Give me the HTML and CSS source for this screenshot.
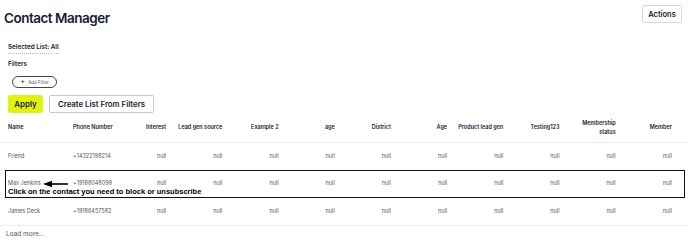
FILE: index.html
```html
<!DOCTYPE html>
<html>
<head>
<meta charset="utf-8">
<link rel="stylesheet" href="styles.css">
</head>
<body>
<div class="page">
  <header class="top">
    <h1 class="title">Contact Manager</h1>
    <button class="btn-actions">Actions</button>
  </header>
  <div class="selected">Selected List: All</div>
  <div class="filters-label">Filters</div>
  <div class="add-filter-row">
    <button class="add-filter"><span class="plus">+</span>Add Filter</button>
  </div>
  <div class="btn-row">
    <button class="btn-apply">Apply</button>
    <button class="btn-create">Create List From Filters</button>
  </div>
  <div class="table">
    <div class="row head">
      <div class="c left">Name</div>
      <div class="c left">Phone Number</div>
      <div class="c">Interest</div>
      <div class="c">Lead gen source</div>
      <div class="c">Example 2</div>
      <div class="c">age</div>
      <div class="c">District</div>
      <div class="c">Age</div>
      <div class="c">Product lead gen</div>
      <div class="c">Testing123</div>
      <div class="c">Membership<br>status</div>
      <div class="c">Member</div>
    </div>
    <div class="row">
      <div class="c left">Friend</div>
      <div class="c left">+14322198214</div>
      <div class="c">null</div><div class="c">null</div><div class="c">null</div><div class="c">null</div><div class="c">null</div>
      <div class="c">null</div><div class="c">null</div><div class="c">null</div><div class="c">null</div><div class="c">null</div>
    </div>
    <div class="row highlight">
      <div class="c left">Max Jenkins</div>
      <div class="c left">+19188048098</div>
      <div class="c">null</div><div class="c">null</div><div class="c">null</div><div class="c">null</div><div class="c">null</div>
      <div class="c">null</div><div class="c">null</div><div class="c">null</div><div class="c">null</div><div class="c">null</div>
      <svg class="arrow" width="26" height="8" viewBox="0 0 26 8"><path d="M25 4H7" stroke="#000" stroke-width="1.6"/><path d="M0 4L9 0.7V7.3Z" fill="#000"/></svg>
      <div class="note">Click on the contact you need to block or unsubscribe</div>
    </div>
    <div class="row">
      <div class="c left">James Deck</div>
      <div class="c left">+19186457582</div>
      <div class="c">null</div><div class="c">null</div><div class="c">null</div><div class="c">null</div><div class="c">null</div>
      <div class="c">null</div><div class="c">null</div><div class="c">null</div><div class="c">null</div><div class="c">null</div>
    </div>
  </div>
  <div class="load-more">Load more...</div>
</div>
</body>
</html>
```
FILE: styles.css
```css
* { box-sizing: border-box; }
html, body { margin: 0; padding: 0; background: #fff; }
body { font-family: Inter, "Noto Sans", sans-serif; color: #1c1c30; }
.page { width: 688px; height: 240px; overflow: hidden; font-size: 7px; }
.top { display: flex; justify-content: space-between; align-items: flex-start; padding: 5px 6px 0 4px; height: 42px; }
.title { margin: 0; font-size: 13.5px; font-weight: 600; letter-spacing: -0.5px; line-height: 18px; padding-top: 4px; color: #1a1b2f; }
.btn-actions { font-family: inherit; font-size: 7.5px; font-weight: 600; color: #1a1b2f; background: #fff; border: 1px solid #d9d9d9; border-radius: 2px; height: 18px; width: 40px; padding: 0; }
.selected { margin-left: 8px; width: fit-content; font-size: 6.3px; font-weight: 600; line-height: 10px; border-bottom: 1px dotted #bbb; padding-bottom: 1px; }
.filters-label { margin: 5px 0 0 8px; font-size: 6.3px; font-weight: 600; line-height: 10px; }
.add-filter-row { padding: 7px 0 0 12px; }
.add-filter { font-family: inherit; font-size: 4.5px; color: #555; background: #fff; border: 1px solid #444; border-radius: 7px; height: 12px; width: 45px; padding: 0; display: flex; align-items: center; justify-content: center; gap: 3px; }
.plus { font-size: 7.5px; line-height: 8px; color: #333; }
.btn-row { display: flex; gap: 6px; padding: 0 0 0 8px; margin-top: 7px; }
.btn-apply { font-family: inherit; font-size: 8px; font-weight: 600; color: #1a1b2f; background: #e0f20f; border: none; border-radius: 2px; height: 18px; width: 35px; padding: 0; }
.btn-create { font-family: inherit; font-size: 7.8px; font-weight: 600; color: #1a1b2f; background: #fff; border: 1px solid #c9c9c9; border-radius: 2px; height: 18px; width: 105px; padding: 0; }
.table { width: 688px; }
.row { display: grid; grid-template-columns: 65px 53px repeat(10, 56.2px); height: 27.5px; align-items: center; border-bottom: 1px solid #ececec; position: relative; }
.row.head { height: 30px; }
.c { font-size: 5.5px; color: #555; text-align: right; padding-right: 8px; line-height: 9px; }
.c.left { text-align: left; padding: 0 0 0 8px; }
.head .c { color: #1a1b2f; font-weight: 600; }
.highlight::after { content: ""; position: absolute; left: 5px; right: 3px; top: -1px; bottom: -1px; border: 1.5px solid #111; pointer-events: none; }
.arrow { position: absolute; left: 43px; top: 9px; }
.note { position: absolute; left: 8px; top: 16.5px; font-family: "Liberation Sans", Arial, sans-serif; font-weight: 700; font-size: 7.5px; color: #000; white-space: nowrap; line-height: 9px; }
.load-more { margin: 4px 0 0 6px; font-size: 6.5px; color: #555; line-height: 9px; }
```
